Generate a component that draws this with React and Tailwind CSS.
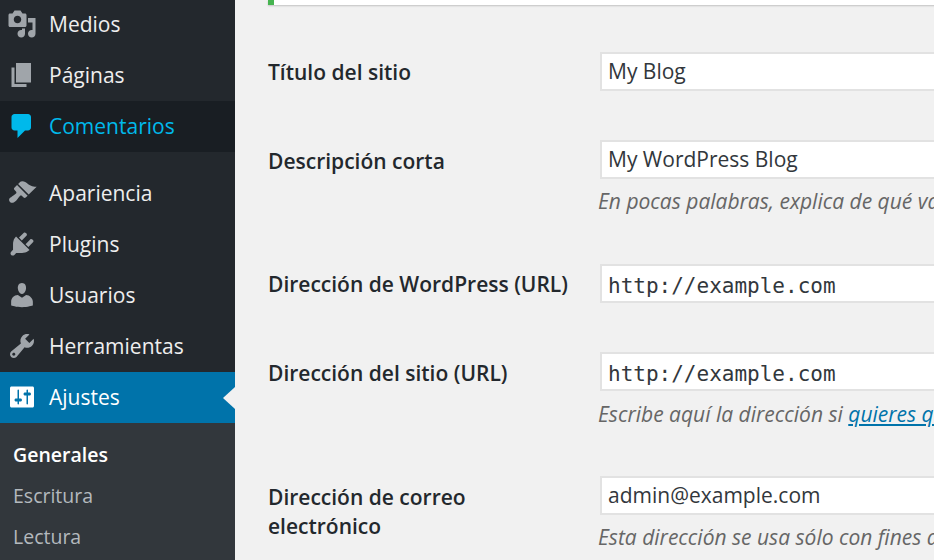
const paths = {
  media: "M13 11V4c0-.55-.45-1-1-1h-1.67L9 1H5L3.67 3H2c-.55 0-1 .45-1 1v7c0 .55.45 1 1 1h10c.55 0 1-.45 1-1zM7 4.5c1.38 0 2.5 1.12 2.5 2.5S8.38 9.5 7 9.5 4.5 8.38 4.5 7 5.62 4.5 7 4.5zM14 6h5v10.5c0 1.38-1.12 2.5-2.5 2.5S14 17.88 14 16.5s1.12-2.5 2.5-2.5c.17 0 .34.02.5.05V9h-3V6zm-4 8.05V13h2v3.5c0 1.38-1.12 2.5-2.5 2.5S7 17.88 7 16.5 8.12 14 9.5 14c.17 0 .34.02.5.05z",
  page: "M6 15V2h10v13H6zm-1 1h8v2H3V5h2v11z",
  comments: "M5 2h9c1.1 0 2 .9 2 2v7c0 1.1-.9 2-2 2h-2l-5 5v-5H5c-1.1 0-2-.9-2-2V4c0-1.1.9-2 2-2z",
  appearance: "M14.48 11.06L7.41 3.99l1.5-1.5c.5-.56 2.3-.47 3.51.32 1.21.8 1.43 1.28 2.91 2.1 1.18.64 2.45 1.26 4.45.85zm-.71.71L6.7 4.7 4.93 6.47c-.39.39-.39 1.02 0 1.41l1.06 1.06c.39.39.39 1.03 0 1.42-.6.6-1.43 1.11-2.21 1.69-.35.26-.7.53-1.01.84C1.43 13.23.91 14.8 2 15.95c1.1 1.08 2.72.56 4.06-.78.3-.31.58-.66.84-1.01.58-.78 1.09-1.61 1.69-2.21.39-.39 1.03-.39 1.42 0l1.06 1.06c.39.39 1.02.39 1.41 0z",
  plugins: "M13.11 4.36L9.87 7.6 8 5.73l3.24-3.24c.35-.34 1.05-.2 1.56.32.52.51.66 1.21.31 1.55zm-8 1.77l.91-1.12 9.01 9.01-1.19.84c-.71.71-2.63 1.16-3.82 1.16H6.14L4.9 17.26c-.59.59-1.54.59-2.12 0-.59-.58-.59-1.53 0-2.12l1.24-1.24v-3.88c0-1.13.4-3.19 1.09-3.89zm7.26 3.97l3.24-3.24c.34-.35 1.04-.21 1.55.31.52.51.66 1.21.31 1.55l-3.24 3.25z",
  users: "M10 9.25c-2.27 0-2.73-3.44-2.73-3.44C7 4.02 7.82 2 9.97 2c2.16 0 2.98 2.02 2.71 3.81 0 0-.41 3.44-2.68 3.44zm0 2.57L12.72 10c2.39 0 4.52 2.33 4.52 4.53v2.49s-3.65 1.13-7.24 1.13c-3.65 0-7.24-1.13-7.24-1.13v-2.49c0-2.25 1.94-4.48 4.47-4.48z",
  tools: "M16.68 9.77c-1.34 1.34-3.3 1.67-4.95.99l-5.41 6.52c-.99.99-2.59.99-3.58 0s-.99-2.59 0-3.57l6.52-5.42c-.68-1.65-.35-3.61.99-4.95 1.28-1.28 3.12-1.62 4.72-1.06l-2.89 2.89 2.82 2.82 2.86-2.87c.53 1.58.18 3.39-1.08 4.65zM3.81 16.21c.4.39 1.04.39 1.43 0 .4-.4.4-1.04 0-1.43-.39-.4-1.03-.4-1.43 0-.39.39-.39 1.03 0 1.43z",
  settings: "M18 16V4c0-.55-.45-1-1-1H3c-.55 0-1 .45-1 1v12c0 .55.45 1 1 1h14c.55 0 1-.45 1-1z",
};

const settingsSliders = [
  "M8 11h1c.55 0 1 .45 1 1s-.45 1-1 1H8v1.5c0 .28-.22.5-.5.5s-.5-.22-.5-.5V13H6c-.55 0-1-.45-1-1s.45-1 1-1h1V5.5c0-.28.22-.5.5-.5s.5.22.5.5V11z",
  "M13 9h-1c-.55 0-1-.45-1-1s.45-1 1-1h1V5.5c0-.28.22-.5.5-.5s.5.22.5.5V7h1c.55 0 1 .45 1 1s-.45 1-1 1h-1v5.5c0 .28-.22.5-.5.5s-.5-.22-.5-.5V9z",
];

function Icon({ name, className }) {
  return (
    <svg viewBox="0 0 20 20" className={"w-[30px] h-[30px] -mt-px fill-current shrink-0 " + className}>
      <path fillRule="evenodd" d={paths[name]} />
      {name === "settings" && settingsSliders.map((d) => <path key={d} d={d} className="fill-[#0073aa]" />)}
    </svg>
  );
}

function Item({ icon, label, rowClass = "", iconClass = "text-[#a0a5aa]", textClass = "text-[#eeeeee]", children }) {
  return (
    <div className={"relative flex items-center h-[51px] pl-[7px] " + rowClass}>
      <Icon name={icon} className={iconClass} />
      <span className={"ml-[12px] text-[21px] " + textClass}>{label}</span>
      {children}
    </div>
  );
}

function Row({ mt, label, labelClass = "", children }) {
  return (
    <div className={"grid grid-cols-[332px_1fr] " + mt}>
      <div className={"font-semibold text-[21px] leading-[29px] text-[#23282d] w-[310px] " + labelClass}>{label}</div>
      <div>{children}</div>
    </div>
  );
}

function Field({ value, mono }) {
  return (
    <div
      className={
        "w-[525px] h-[39px] bg-white border-2 border-[#e2e2e2] pl-[6px] flex items-center text-[21px] text-[#32373c] whitespace-nowrap " +
        (mono ? "pt-[6px] font-['DejaVu_Sans_Mono','Liberation_Mono',monospace]" : "")
      }
    >
      {value}
    </div>
  );
}

function Desc({ mt = "mt-[8px]", children }) {
  return <p className={"-ml-[2px] text-[21px] leading-[29px] italic text-[#666666] whitespace-nowrap " + mt}>{children}</p>;
}

export default function App() {
  return (
    <div className="flex w-[934px] h-[560px] overflow-hidden bg-[#f1f1f1] font-['Open_Sans','Noto_Sans',sans-serif]">
      <aside className="w-[235px] shrink-0 bg-[#23282d] -mt-px">
        <Item icon="media" label="Medios" />
        <Item icon="page" label="Páginas" />
        <Item icon="comments" label="Comentarios" rowClass="bg-[#191e23]" iconClass="text-[#00b9eb]" textClass="text-[#00b9eb]" />
        <div className="h-[16px]" />
        <Item icon="appearance" label="Apariencia" />
        <Item icon="plugins" label="Plugins" />
        <Item icon="users" label="Usuarios" />
        <Item icon="tools" label="Herramientas" />
        <Item icon="settings" label="Ajustes" rowClass="bg-[#0073aa]" iconClass="text-white" textClass="text-white">
          <span className="absolute right-0 top-1/2 -translate-y-1/2 border-y-[11px] border-y-transparent border-r-[12px] border-r-[#f1f1f1]" />
        </Item>
        <div className="bg-[#32373c] h-[200px] pt-[11px] pl-[13px] text-[19.5px] leading-[41px] text-[#b4b9be]">
          <div className="font-semibold text-white">Generales</div>
          <div>Escritura</div>
          <div>Lectura</div>
        </div>
      </aside>
      <main className="flex-1 min-w-0 pl-[33px]">
        <div className="h-[5px] bg-white border-l-[6px] border-l-[#46b450] shadow-[0_1px_2px_rgba(0,0,0,0.2)] -mr-10" />
        <Row mt="mt-[52px]" label="Título del sitio" labelClass="pt-[1px]">
          <div className="-mt-[5px]"><Field value="My Blog" /></div>
        </Row>
        <Row mt="mt-[54px]" label="Descripción corta" labelClass="pt-[2px]">
          <div className="-mt-[5px]">
            <Field value="My WordPress Blog" />
            <Desc>En pocas palabras, explica de qué va este sitio.</Desc>
          </div>
        </Row>
        <Row mt="mt-[53px]" label="Dirección de WordPress (URL)" labelClass="pt-[1px]">
          <div className="-mt-[5px]"><Field value="http://example.com" mono /></div>
        </Row>
        <Row mt="mt-[54px]" label="Dirección del sitio (URL)" labelClass="pt-[2px]">
          <div className="-mt-[5px]">
            <Field value="http://example.com" mono />
            <Desc mt="mt-[9px]">
              Escribe aquí la dirección si <span className="underline text-[#0073aa]">quieres que la portada de tu sitio</span>
            </Desc>
          </div>
        </Row>
        <Row mt="mt-[52px]" label="Dirección de correo electrónico" labelClass="pt-[2px]">
          <div className="-mt-[5px]">
            <Field value="admin@example.com" />
            <Desc>Esta dirección se usa sólo con fines de administración.</Desc>
          </div>
        </Row>
      </main>
    </div>
  );
}
